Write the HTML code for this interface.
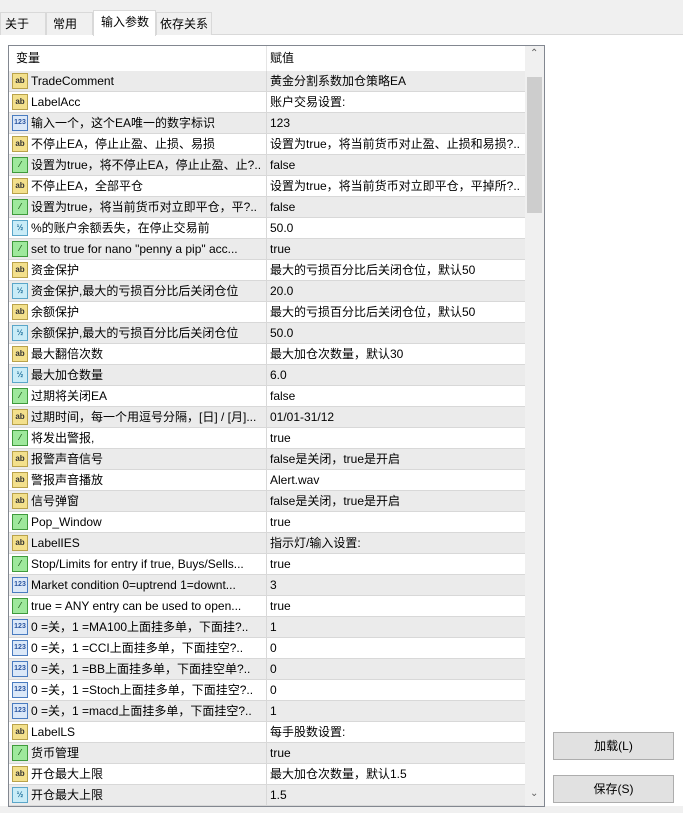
<!DOCTYPE html><html><head><meta charset="utf-8"><style>
*{margin:0;padding:0;box-sizing:border-box}
body{width:683px;height:813px;background:#fff;position:relative;overflow:hidden;font-family:"Liberation Sans","Noto Sans CJK SC",sans-serif;font-size:12px;color:#000}
.top{position:absolute;left:0;top:0;width:683px;height:35px;background:#f0f0f0;border-bottom:1px solid #d9d9d9}
.tab{position:absolute;top:12px;height:23px;border:1px solid #d9d9d9;border-bottom:none;background:#f0f0f0;line-height:22px;padding-left:4px}
.tab.sel{top:10px;height:26px;background:#fff;padding-left:7px}
.bot{position:absolute;left:0;top:806px;width:683px;height:7px;background:#f0f0f0}
.list{position:absolute;left:8px;top:45px;width:537px;height:762px;border:1px solid #828790;background:#fff;overflow:hidden}
.hdr{position:absolute;left:0;top:0;width:516px;height:25px;line-height:25px}
.hdr span{position:absolute}
.row{position:absolute;left:0;width:516px;height:21px;border-bottom:1px solid #d8d8d8;line-height:20px;white-space:nowrap}
.row.g{background:#ebebeb}
.row .n{position:absolute;left:22px;width:234px;overflow:hidden}
.row .v{position:absolute;left:261px;width:255px;overflow:hidden}
.row .sep{position:absolute;left:257px;top:0;width:1px;height:21px;background:#d8d8d8}
.ic{position:absolute;left:3px;top:2px;width:16px;height:16px;font-size:8px;line-height:14px;text-align:center;font-weight:bold;border:1px solid}
.s{background:#f3e08c;border-color:#b9a24a;color:#333}
.i{background:#dbe8f8;border-color:#4a7cc0;color:#2a55a0;font-size:7px}
.b{background:#9ee89c;border-color:#3f9a3c;color:#1f5f1c}
.d{background:#c9ecf7;border-color:#5aa6c9;color:#1f6f9a}
.sb{position:absolute;left:516px;top:0;width:19px;height:760px;background:#f0f0f0}
.thumb{position:absolute;left:2px;top:31px;width:15px;height:136px;background:#cdcdcd}
.btn{position:absolute;left:553px;width:121px;height:28px;background:#e1e1e1;border:1px solid #adadad;text-align:center;line-height:26px}
</style></head><body>
<div class="top"></div>
<div class="tab" style="left:0;width:46px">关于</div>
<div class="tab" style="left:46px;width:47px;padding-left:6px">常用</div>
<div class="tab sel" style="left:93px;width:63px">输入参数</div>
<div class="tab" style="left:156px;width:56px;padding-left:3px">依存关系</div>
<div class="bot"></div>
<div class="list">
<div class="hdr"><span style="left:7px">变量</span><span style="left:261px">赋值</span><span style="left:257px;top:0;width:1px;height:25px;background:#e5e5e5"></span></div>
<div id="rows"></div>
<div class="sb"><div style="position:absolute;left:5px;top:2px;font-size:10px;color:#606060">&#8963;</div><div class="thumb"></div><div style="position:absolute;left:5px;top:742px;font-size:10px;color:#606060">&#8964;</div></div>
</div>
<div class="btn" style="top:732px">加载(L)</div>
<div class="btn" style="top:775px">保存(S)</div>
<script>
var R=[["s","TradeComment","黄金分割系数加仓策略EA"],["s","LabelAcc","账户交易设置:"],["i","输入一个，这个EA唯一的数字标识","123"],["s","不停止EA，停止止盈、止损、易损","设置为true，将当前货币对止盈、止损和易损?.."],["b","设置为true，将不停止EA，停止止盈、止?..","false"],["s","不停止EA，全部平仓","设置为true，将当前货币对立即平仓，平掉所?.."],["b","设置为true，将当前货币对立即平仓，平?..","false"],["d","%的账户余额丢失，在停止交易前","50.0"],["b","set to true for nano \"penny a pip\" acc...","true"],["s","资金保护","最大的亏损百分比后关闭仓位，默认50"],["d","资金保护,最大的亏损百分比后关闭仓位","20.0"],["s","余额保护","最大的亏损百分比后关闭仓位，默认50"],["d","余额保护,最大的亏损百分比后关闭仓位","50.0"],["s","最大翻倍次数","最大加仓次数量，默认30"],["d","最大加仓数量","6.0"],["b","过期将关闭EA","false"],["s","过期时间，每一个用逗号分隔，[日] / [月]...","01/01-31/12"],["b","将发出警报,","true"],["s","报警声音信号","false是关闭，true是开启"],["s","警报声音播放","Alert.wav"],["s","信号弹窗","false是关闭，true是开启"],["b","Pop_Window","true"],["s","LabelIES","指示灯/输入设置:"],["b","Stop/Limits for entry if true, Buys/Sells...","true"],["i","Market condition 0=uptrend 1=downt...","3"],["b","true = ANY entry can be used to open...","true"],["i","0 =关，1 =MA100上面挂多单，下面挂?..","1"],["i","0 =关，1 =CCI上面挂多单，下面挂空?..","0"],["i","0 =关，1 =BB上面挂多单，下面挂空单?..","0"],["i","0 =关，1 =Stoch上面挂多单，下面挂空?..","0"],["i","0 =关，1 =macd上面挂多单，下面挂空?..","1"],["s","LabelLS","每手股数设置:"],["b","货币管理","true"],["s","开仓最大上限","最大加仓次数量，默认1.5"],["d","开仓最大上限","1.5"]];
var T={s:"ab",i:"123",b:"⁄",d:"½"},h="";
R.forEach(function(r,k){h+='<div class="row'+(k%2==0?' g':'')+'" style="top:'+(25+k*21)+'px"><div class="ic '+r[0]+'">'+T[r[0]]+'</div><div class="n"></div><div class="sep"></div><div class="v"></div></div>';});
document.getElementById("rows").innerHTML=h;
var e=document.querySelectorAll(".row");R.forEach(function(r,k){e[k].children[1].textContent=r[1];e[k].children[3].textContent=r[2];});
</script>
</body></html>
